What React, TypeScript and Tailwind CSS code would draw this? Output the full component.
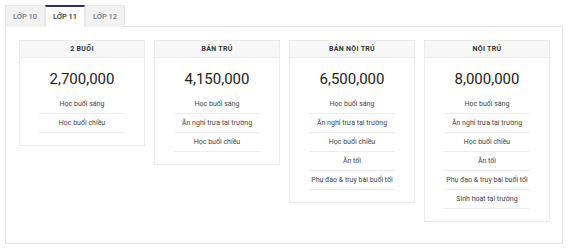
import React, { useState } from "react";

// fee tables by grade
const plans = [
  {
    title: "2 Buổi",
    price: "2,700,000",
    items: ["Học buổi sáng", "Học buổi chiều"],
  },
  {
    title: "Bán trú",
    price: "4,150,000",
    items: ["Học buổi sáng", "Ăn nghỉ trưa tại trường", "Học buổi chiều"],
  },
  {
    title: "Bán nội trú",
    price: "6,500,000",
    items: [
      "Học buổi sáng",
      "Ăn nghỉ trưa tại trường",
      "Học buổi chiều",
      "Ăn tối",
      "Phụ đạo & truy bài buổi tối",
    ],
  },
  {
    title: "Nội trú",
    price: "8,000,000",
    items: [
      "Học buổi sáng",
      "Ăn nghỉ trưa tại trường",
      "Học buổi chiều",
      "Ăn tối",
      "Phụ đạo & truy bài buổi tối",
      "Sinh hoạt tại trường",
    ],
  },
];

const tabs = ["LỚP 10", "LỚP 11", "LỚP 12"];

const App: React.FC = () => {
  const [active, setActive] = useState(1);

  return (
    <div
      className="w-[570px] h-[250px] bg-white pt-[5px] pl-[5px] pr-[7px]"
      style={{ fontFamily: "Roboto, 'Noto Sans', sans-serif" }}
    >
      {/* Tabs */}
      <div className="flex h-[21px]">
        {tabs.map((t, i) => (
          <button
            key={t}
            onClick={() => setActive(i)}
            className={`w-[40px] h-[22px] text-[7.5px] font-medium flex items-center justify-center ${
              active === i
                ? "bg-white border-t-2 border-t-[#283163] border-x border-x-[#e6e6e6] text-[#333] relative z-10"
                : "bg-[#f2f2f2] border border-[#e6e6e6] border-b-0 text-[#777]"
            }`}
          >
            {t}
          </button>
        ))}
      </div>

      {/* Panel */}
      <div className="border border-[#e3e3e3] h-[218px] pt-[13px] pl-[13px] flex gap-[9px] items-start">
        {plans.map((p) => (
          <div
            key={p.title}
            className="w-[126px] border border-[#ececec] bg-white pb-[12px]"
          >
            <div className="h-[17px] bg-[#f7f7f7] border-b border-[#ececec] flex items-center justify-center text-[7px] font-bold uppercase tracking-[0.3px] text-[#333]">
              {p.title}
            </div>
            <div className="pt-[12px] pb-[7px] text-center text-[15px] leading-[18px] text-[#222]">
              {p.price}
            </div>
            <ul className="mx-[19px]">
              {p.items.map((it) => (
                <li
                  key={it}
                  className="h-[19px] border-b border-[#eeeeee] flex items-center justify-center whitespace-nowrap text-[7px] text-[#444]"
                >
                  {it}
                </li>
              ))}
            </ul>
          </div>
        ))}
      </div>
    </div>
  );
};

export default App;
